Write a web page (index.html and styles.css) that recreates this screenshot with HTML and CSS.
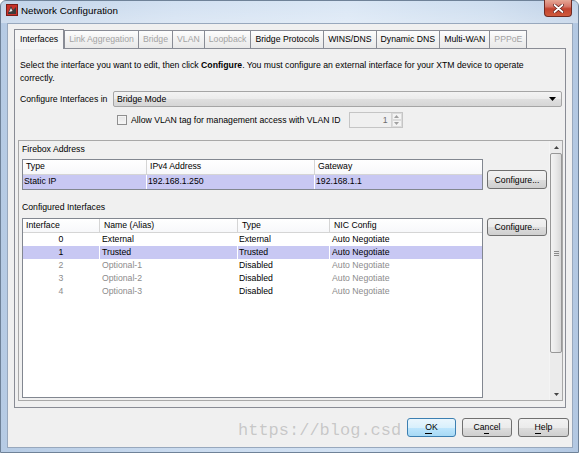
FILE: index.html
```html
<!DOCTYPE html>
<html>
<head>
<meta charset="utf-8">
<title>Network Configuration</title>
<link rel="stylesheet" href="styles.css">
</head>
<body>
<div class="window">
  <div class="titlebar">
    <svg class="app-icon" width="12" height="12" viewBox="0 0 12 12">
      <rect x="0.5" y="0.5" width="11" height="11" fill="#c8322a" stroke="#7a1d18"/>
      <path d="M2 9 L5 2 L7 6 L10 3 L10 10 L2 10 Z" fill="#3b3b3b"/>
      <path d="M3 8 L5 4 L6.5 7 Z" fill="#e8e8e8"/>
    </svg>
    <span class="title">Network Configuration</span>
    <div class="close-btn">
      <svg width="11" height="9" viewBox="0 0 11 9">
        <path d="M1.5 1 L9.5 8 M9.5 1 L1.5 8" stroke="#5a1a14" stroke-width="3.2" stroke-linecap="round"/>
        <path d="M1.5 1 L9.5 8 M9.5 1 L1.5 8" stroke="#ffffff" stroke-width="1.8" stroke-linecap="round"/>
      </svg>
    </div>
  </div>

  <div class="client">
    <div class="tabs">
      <div class="tab selected">Interfaces</div>
      <div class="tab disabled">Link Aggregation</div>
      <div class="tab disabled">Bridge</div>
      <div class="tab disabled">VLAN</div>
      <div class="tab disabled">Loopback</div>
      <div class="tab">Bridge Protocols</div>
      <div class="tab">WINS/DNS</div>
      <div class="tab">Dynamic DNS</div>
      <div class="tab">Multi-WAN</div>
      <div class="tab disabled">PPPoE</div>
    </div>

    <div class="panel">
      <p class="intro">Select the interface you want to edit, then click <b>Configure</b>. You must configure an external interface for your XTM device to operate<br>correctly.</p>

      <div class="mode-row">
        <span class="mode-label">Configure Interfaces in</span>
        <div class="combo">
          <span>Bridge Mode</span>
          <svg class="combo-arrow" width="7" height="4" viewBox="0 0 7 4"><path d="M0 0 H7 L3.5 4 Z" fill="#000"/></svg>
        </div>
      </div>

      <div class="vlan-row">
        <span class="checkbox"></span>
        <span class="vlan-label">Allow VLAN tag for management access with VLAN ID</span>
        <div class="spinner">
          <span class="spin-value">1</span>
          <div class="spin-buttons">
            <span class="spin-btn"><svg width="5" height="3" viewBox="0 0 5 3"><path d="M0 3 L2.5 0 L5 3 Z" fill="#a0a0a0"/></svg></span>
            <span class="spin-btn"><svg width="5" height="3" viewBox="0 0 5 3"><path d="M0 0 L2.5 3 L5 0 Z" fill="#a0a0a0"/></svg></span>
          </div>
        </div>
      </div>

      <div class="scrollpane">
        <div class="scroll-content">
          <div class="section-label">Firebox Address</div>
          <div class="section-row">
            <div class="grid firebox">
              <div class="grid-head">
                <span class="cell c-type">Type</span>
                <span class="cell c-ip">IPv4 Address</span>
                <span class="cell c-gw">Gateway</span>
              </div>
              <div class="grid-row selected">
                <span class="cell c-type">Static IP</span>
                <span class="cell c-ip">192.168.1.250</span>
                <span class="cell c-gw">192.168.1.1</span>
              </div>
            </div>
            <div class="btn configure bottom">Configure...</div>
          </div>

          <div class="section-label second">Configured Interfaces</div>
          <div class="section-row second">
            <div class="grid ifaces">
              <div class="grid-head">
                <span class="cell c-if">Interface</span>
                <span class="cell c-name">Name (Alias)</span>
                <span class="cell c-kind">Type</span>
                <span class="cell c-nic">NIC Config</span>
              </div>
              <div class="grid-row">
                <span class="cell c-if num">0</span>
                <span class="cell c-name">External</span>
                <span class="cell c-kind">External</span>
                <span class="cell c-nic">Auto Negotiate</span>
              </div>
              <div class="grid-row selected">
                <span class="cell c-if num">1</span>
                <span class="cell c-name">Trusted</span>
                <span class="cell c-kind">Trusted</span>
                <span class="cell c-nic">Auto Negotiate</span>
              </div>
              <div class="grid-row dim">
                <span class="cell c-if num">2</span>
                <span class="cell c-name">Optional-1</span>
                <span class="cell c-kind">Disabled</span>
                <span class="cell c-nic">Auto Negotiate</span>
              </div>
              <div class="grid-row dim">
                <span class="cell c-if num">3</span>
                <span class="cell c-name">Optional-2</span>
                <span class="cell c-kind">Disabled</span>
                <span class="cell c-nic">Auto Negotiate</span>
              </div>
              <div class="grid-row dim">
                <span class="cell c-if num">4</span>
                <span class="cell c-name">Optional-3</span>
                <span class="cell c-kind">Disabled</span>
                <span class="cell c-nic">Auto Negotiate</span>
              </div>
            </div>
            <div class="btn configure top">Configure...</div>
          </div>
        </div>

        <div class="vscroll">
          <div class="arrow-btn"><svg width="5" height="3" viewBox="0 0 5 3"><path d="M0 3 L2.5 0 L5 3 Z" fill="#444"/></svg></div>
          <div class="track">
            <div class="thumb">
              <svg width="5" height="5" viewBox="0 0 5 5"><path d="M0 0.5 H5 M0 2.5 H5 M0 4.5 H5" stroke="#8a8a8a" stroke-width="1"/></svg>
            </div>
          </div>
          <div class="arrow-btn"><svg width="5" height="3" viewBox="0 0 5 3"><path d="M0 0 L2.5 3 L5 0 Z" fill="#444"/></svg></div>
        </div>
      </div>
    </div>

    <div class="buttons">
      <div class="btn dlg default"><span class="mn mn-ok">OK</span></div>
      <div class="btn dlg cancel"><span class="mn mn-cancel">Cancel</span></div>
      <div class="btn dlg help"><span class="mn mn-help">Help</span></div>
    </div>
  </div>

  <div class="watermark">https://blog.csd</div>
</div>
</body>
</html>
```

FILE: styles.css
```css
* { box-sizing: border-box; }
html, body { margin: 0; padding: 0; }
body {
  width: 579px;
  height: 453px;
  overflow: hidden;
  font-family: "Liberation Sans", Arial, sans-serif;
  font-size: 8.7px;
  color: #000;
  background: #fff;
}

.window {
  position: relative;
  width: 579px;
  height: 453px;
  display: flex;
  flex-direction: column;
  border: 1px solid #6f8298;
  border-radius: 6px 6px 0 0;
  background: linear-gradient(90deg, #b6cbe4 0%, #cadbef 30%, #d3e2f3 60%, #c4d7ec 85%, #b3c8e2 100%);
}

.titlebar {
  height: 22px;
  flex: none;
  display: flex;
  align-items: flex-start;
  padding-left: 5px;
  background: linear-gradient(180deg, rgba(255,255,255,0.15), rgba(255,255,255,0.35));
}
.app-icon { margin-top: 3px; flex: none; }
.title {
  margin-left: 3px;
  margin-top: 4px;
  font-size: 9.8px;
  line-height: 12px;
  color: #000;
}
.close-btn {
  margin-left: auto;
  margin-right: 6px;
  margin-top: -1px;
  width: 28px;
  height: 17px;
  border: 1px solid #6f2a22;
  border-top: none;
  border-radius: 0 0 4px 4px;
  background: linear-gradient(180deg, #e6a795 0%, #d6786a 40%, #c2432f 55%, #d05a3c 100%);
  display: flex;
  align-items: center;
  justify-content: center;
}

.client {
  flex: none;
  height: 425px;
  margin: 0 5px 0 6px;
  background: #f0f0f0;
  border: 1px solid #98a8bd;
  display: flex;
  flex-direction: column;
}

/* tabs */
.tabs {
  position: relative;
  z-index: 1;
  display: flex;
  align-items: flex-end;
  height: 20px;
  margin: 5px 0 0 6px;
  padding-left: 1px;
}
.tab {
  height: 18px;
  margin-bottom: 1px;
  padding: 0 4px;
  border: 1px solid #898c95;
  border-bottom: none;
  margin-right: -1px;
  background: linear-gradient(180deg, #fdfdfd 0%, #f2f2f2 50%, #e9e9e9 100%);
  line-height: 16px;
  white-space: nowrap;
}
.tab.disabled { color: #a3a3a3; }
.tab.selected {
  height: 20px;
  margin-bottom: 0;
  margin-left: -1px;
  margin-right: 0;
  padding: 0 5px;
  background: #f5f5f5;
  line-height: 18px;
}

.panel {
  position: relative;
  margin: -1px 0 0 6px;
  width: 552px;
  height: 360px;
  border: 1px solid #898c95;
  background: #f0f0f0;
  display: flex;
  flex-direction: column;
}

.intro {
  margin: 10px 0 0 5px;
  line-height: 13px;
}
.intro b { font-weight: bold; }

.mode-row {
  display: flex;
  align-items: center;
  height: 16px;
  margin-top: 6px;
  padding-left: 5px;
}
.mode-label { width: 93px; flex: none; }
.combo {
  flex: 1;
  height: 16px;
  margin-right: 3px;
  border: 1px solid #a5a5a5;
  border-radius: 2px;
  background: linear-gradient(180deg, #f3f3f3 0%, #ebebeb 50%, #dfdfdf 51%, #d6d6d6 100%);
  display: flex;
  align-items: center;
  padding: 0 5px 0 3px;
}
.combo-arrow { margin-left: auto; }

.vlan-row {
  display: flex;
  align-items: center;
  height: 16px;
  margin-top: 5px;
  padding-left: 102px;
}
.checkbox {
  width: 10px;
  height: 10px;
  border: 1px solid #8f8f8f;
  background: linear-gradient(180deg, #e4e4e4, #f7f7f7);
  box-shadow: inset 0 0 0 1px #f4f4f4;
  margin-right: 4px;
  flex: none;
}
.spinner {
  margin-left: 8px;
  width: 54px;
  height: 16px;
  border: 1px solid #c5c5c5;
  background: #f0f0f0;
  display: flex;
  align-items: stretch;
}
.spin-value {
  flex: 1;
  text-align: right;
  padding-right: 3px;
  line-height: 14px;
  color: #6d6d6d;
}
.spin-buttons {
  width: 11px;
  display: flex;
  flex-direction: column;
  border-left: 1px solid #d4d4d4;
}
.spin-btn {
  flex: 1;
  display: flex;
  align-items: center;
  justify-content: center;
  border: 1px solid #dcdcdc;
  background: #f4f4f4;
}

/* scroll pane */
.scrollpane {
  margin: 12px 0 0 3px;
  width: 545px;
  height: 261px;
  border: 1px solid #a8a8a8;
  display: flex;
}
.scroll-content {
  flex: 1;
  padding-left: 3px;
}
.section-label {
  margin-top: 2px;
  line-height: 13px;
}
.section-label.second { margin-top: 11px; }
.section-row {
  display: flex;
  margin-top: 3px;
}
.section-row.second { margin-top: 4px; }

.grid {
  width: 461px;
  border: 1px solid #828790;
  background: #fff;
  flex: none;
}
.grid.ifaces { height: 180px; }
.grid-head {
  display: flex;
  border-bottom: 1px solid #d5d5d5;
  background: linear-gradient(180deg, #ffffff, #f7f8fa);
}
.firebox .grid-head { height: 15px; }
.ifaces .grid-head { height: 14px; }
.grid-head .cell {
  border-right: 1px solid #d5d5d5;
  padding-left: 3px;
  line-height: 13px;
}
.grid-head .cell:last-child { border-right: none; }
.ifaces .grid-head .cell { padding-left: 4px; }
.ifaces .grid-head .c-if { padding-left: 3px; }

.grid-row { display: flex; }
.firebox .grid-row { height: 14px; }
.ifaces .grid-row { height: 13px; }
.grid-row .cell {
  border-right: 1px solid #ffffff;
  padding-left: 1px;
  line-height: 13px;
  white-space: nowrap;
}
.grid-row .cell:last-child { border-right: none; }
.ifaces .grid-row .cell { padding-left: 2px; }
.ifaces .grid-row .c-kind { padding-left: 1px; }
.grid-row .cell.num { text-align: center; padding-left: 0; }
.grid-row.selected { background: #c8c8f3; }
.grid-row.dim .c-if,
.grid-row.dim .c-name,
.grid-row.dim .c-nic { color: #8c8c8c; }

.cell { flex: none; display: block; }
.c-type { width: 124px; }
.c-ip { width: 168px; }
.c-gw { width: 167px; }
.c-if { width: 77px; }
.c-name { width: 138px; }
.c-kind { width: 92px; }
.c-nic { width: 152px; }

.btn {
  border: 1px solid #707070;
  border-radius: 3px;
  background: linear-gradient(180deg, #f2f2f2 0%, #ebebeb 50%, #dddddd 51%, #cfcfcf 100%);
  display: flex;
  align-items: center;
  justify-content: center;
  white-space: nowrap;
}
.btn.configure {
  width: 60px;
  margin-left: 4px;
  flex: none;
}
.btn.configure.bottom { height: 19px; align-self: flex-end; margin-bottom: 1px; }
.btn.configure.top { height: 18px; align-self: flex-start; }

/* scrollbar */
.vscroll {
  width: 13px;
  flex: none;
  display: flex;
  flex-direction: column;
  background: #ebebeb;
  border-left: 1px solid #f4f4f4;
}
.arrow-btn {
  height: 12px;
  display: flex;
  align-items: center;
  justify-content: center;
}
.track { flex: 1; }
.thumb {
  height: 200px;
  border: 1px solid #979797;
  border-radius: 2px;
  background: linear-gradient(90deg, #f3f3f3 0%, #e9e9e9 50%, #d8d8d8 100%);
  display: flex;
  align-items: center;
  justify-content: center;
}

/* dialog buttons */
.buttons {
  display: flex;
  justify-content: flex-end;
  gap: 6px;
  margin-top: 10px;
  margin-right: 3px;
}
.btn.dlg { height: 19px; }
.btn.default {
  width: 49px;
  border-color: #3c7fb1;
  background: linear-gradient(180deg, #eaf6fd 0%, #d9f0fc 50%, #bee6fd 51%, #a7d9f5 100%);
}
.btn.cancel { width: 50px; }
.btn.help { width: 51px; }

/* mnemonic underline */
.mn { position: relative; line-height: 11px; }
.mn::after {
  content: "";
  position: absolute;
  bottom: -1px;
  height: 1px;
  background: #000;
}
.mn-ok::after { left: 0; width: 7px; }
.mn-cancel::after { left: 11px; width: 5px; }
.mn-help::after { left: 0; width: 6px; }

.watermark {
  position: absolute;
  left: 237px;
  top: 419px;
  font-family: "Liberation Mono", "Courier New", monospace;
  font-size: 17px;
  line-height: 22px;
  color: rgba(150, 150, 150, 0.45);
  white-space: nowrap;
  pointer-events: none;
}
```
